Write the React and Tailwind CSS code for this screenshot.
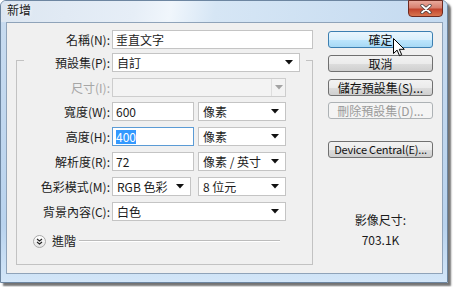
import { useState } from 'react';

// 小三角形下拉箭頭
function Arrow({ disabled }) {
  return (
    <svg width="8" height="5" viewBox="0 0 8 5">
      <path d="M0 0h8L4 4.5z" fill={disabled ? '#a3a3a3' : '#111'} />
    </svg>
  );
}

function Select({ value, w }) {
  return (
    <div className={`flex h-[19px] items-center justify-between border border-[#c4c4c4] bg-white pl-[4px] pr-[6px] ${w}`}>
      <span className="leading-none">{value}</span>
      <Arrow />
    </div>
  );
}

function Input({ children, w, focused }) {
  return (
    <div
      className={`flex h-[19px] items-center border bg-white pl-[3px] ${w} ${
        focused ? 'border-[#5b9bd5]' : 'border-[#c4c4c4]'
      }`}
    >
      {children}
    </div>
  );
}

function Button({ label, primary, disabled, className = '' }) {
  let look =
    'border-[#707070] bg-[linear-gradient(#f2f2f2_0%,#ebebeb_50%,#dddddd_51%,#cfcfcf_100%)] text-[#111]';
  if (primary)
    look =
      'border-[#3c7fb1] bg-[linear-gradient(#eaf6fd_0%,#d9f0fc_50%,#bee6fd_51%,#a7d9f5_100%)] text-[#111]';
  if (disabled) look = 'border-[#adb2b5] bg-[#f4f4f4] text-[#9a9a9a]';
  return (
    <div
      className={`flex h-[17px] w-[105px] items-center justify-center whitespace-nowrap rounded-[3px] border leading-none ${look} ${className}`}
    >
      {label}
    </div>
  );
}

function Row({ label, disabled, children, className = '' }) {
  return (
    <div className={`flex h-[19px] items-center gap-[2px] ${className}`}>
      <span className={`w-[93px] text-right leading-none ${disabled ? 'text-[#a6a6a6]' : ''}`}>{label}</span>
      {children}
    </div>
  );
}

export default function App() {
  const [name] = useState('垂直文字');

  return (
    <div className="relative h-[287px] w-[454px] bg-white font-['Noto_Sans_CJK_TC',sans-serif] text-[12px] text-[#1b1b1b]">
      <div className="flex h-[283px] w-[448px] flex-col rounded-t-[6px] border border-[#6d86a1] bg-[linear-gradient(180deg,#c9dcf0,#b9d3ee_80%,#d3e6f8)] shadow-[3px_3px_2px_rgba(0,0,0,0.55)]">
        {/* 標題列 */}
        <div className="flex h-[21px] items-start justify-between rounded-t-[5px] bg-[linear-gradient(100deg,#dce6f1_0%,#e6eef7_30%,#f0f6fc_38%,#d6e6f5_48%,#c4daf0_100%)]">
          <span className="ml-[6px] mt-[3px] leading-none text-[#202020] [text-shadow:0_0_4px_#fff]">新增</span>
          <div className="-mt-[1px] mr-[4px] flex h-[17px] w-[35px] items-center justify-center rounded-b-[4px] border border-[#6e2a20] bg-[linear-gradient(#e9a99c_0%,#d7806f_45%,#c2442d_55%,#d9764f_100%)]">
            <svg width="12" height="10" viewBox="0 0 12 10">
              <path d="M2 1.5l8 7M10 1.5l-8 7" stroke="#3a3a3a" strokeWidth="3.2" strokeLinecap="round" />
              <path d="M2 1.5l8 7M10 1.5l-8 7" stroke="#fff" strokeWidth="1.8" strokeLinecap="round" />
            </svg>
          </div>
        </div>

        {/* 客戶區 */}
        <div className="ml-[5px] mr-[4px] flex h-[252px] border border-[#8fa3b9] bg-[#f0f0f0]">
          {/* 左側欄 */}
          <div className="w-[313px] pt-[7px]">
            <div className="flex h-[19px] items-center gap-[2px]">
              <span className="w-[103px] text-right leading-none">名稱(N):</span>
              <Input w="w-[201px]">
                <span className="leading-none">{name}</span>
              </Input>
            </div>

            <div className="ml-[9px] mt-[11px] h-[205px] w-[297px] border border-[#c2c2c2]">
              {/* 預設集蓋在框線上 */}
              <div className="-mt-[8px] ml-[7px] flex h-[19px] w-fit items-center gap-[2px] bg-[#f0f0f0] pr-[6px]">
                <span className="w-[86px] text-right leading-none">預設集(P):</span>
                <Select value="自訂" w="w-[188px]" />
              </div>

              <Row label="尺寸(I):" disabled className="mt-[6px]">
                <div className="flex h-[19px] w-[174px] items-center justify-end border border-[#cdcdcd] bg-[#f3f3f3]">
                  <div className="flex h-full w-[14px] items-center justify-center border-l border-[#dedede]">
                    <Arrow disabled />
                  </div>
                </div>
              </Row>

              <Row label="寬度(W):" className="mt-[5px]">
                <Input w="w-[82px]">
                  <span className="leading-none">600</span>
                </Input>
                <Select value="像素" w="ml-[2px] w-[88px]" />
              </Row>

              <Row label="高度(H):" className="mt-[6px]">
                <Input w="w-[82px]" focused>
                  <span className="bg-[#3399ff] leading-[14px] text-white">400</span>
                </Input>
                <Select value="像素" w="ml-[2px] w-[88px]" />
              </Row>

              <Row label="解析度(R):" className="mt-[6px]">
                <Input w="w-[82px]">
                  <span className="leading-none">72</span>
                </Input>
                <Select value="像素 / 英寸" w="ml-[2px] w-[88px]" />
              </Row>

              <Row label="色彩模式(M):" className="mt-[6px]">
                <Select value="RGB 色彩" w="w-[79px]" />
                <Select value="8 位元" w="ml-[5px] w-[88px]" />
              </Row>

              <Row label="背景內容(C):" className="mt-[6px]">
                <Select value="白色" w="w-[174px]" />
              </Row>

              {/* 進階 */}
              <div className="ml-[16px] mt-[13px] flex h-[14px] items-center">
                <div className="flex h-[13px] w-[13px] items-center justify-center rounded-full border border-[#a9a9a9] bg-[linear-gradient(#ffffff,#e4e4e4)]">
                  <svg width="7" height="7" viewBox="0 0 7 7">
                    <path d="M1 1l2.5 2 2.5-2M1 4l2.5 2 2.5-2" fill="none" stroke="#222" strokeWidth="1.1" />
                  </svg>
                </div>
                <span className="ml-[6px] leading-none">進階</span>
                <div className="ml-[3px] h-[2px] w-[201px] border-t border-b border-t-[#bcbcbc] border-b-white" />
              </div>
            </div>
          </div>

          {/* 右側按鈕 */}
          <div className="ml-[8px] flex w-[105px] flex-col pt-[8px]">
            <Button label="確定" primary />
            <Button label="取消" className="mt-[7px]" />
            <Button label="儲存預設集(S)..." className="mt-[7px]" />
            <Button label="刪除預設集(D)..." disabled className="mt-[6px]" />
            <Button label="Device Central(E)..." className="mt-[22px] text-[11px] tracking-[-0.2px]" />
            <div className="mt-[54px] text-center leading-[16px]">影像尺寸:</div>
            <div className="mt-[4px] text-center leading-[16px]">703.1K</div>
          </div>
        </div>
      </div>

      {/* 滑鼠游標 */}
      <svg className="absolute left-[393px] top-[38px]" width="12" height="19" viewBox="0 0 12 19">
        <path d="M0.5 0.5v15l3.6-3.4 2.4 5.6 2.2-1-2.4-5.4h5z" fill="#fff" stroke="#000" strokeWidth="1" strokeLinejoin="round" />
      </svg>
    </div>
  );
}
